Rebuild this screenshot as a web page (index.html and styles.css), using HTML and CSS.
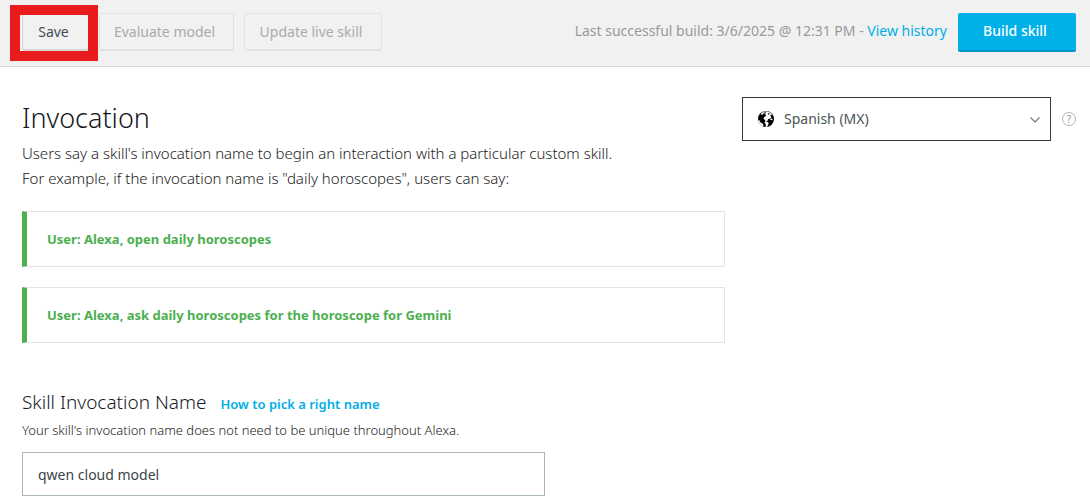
FILE: index.html
```html
<!DOCTYPE html>
<html lang="en">
<head>
<meta charset="utf-8">
<title>Invocation</title>
<link rel="stylesheet" href="styles.css">
</head>
<body>
<header class="toolbar">
  <div class="toolbar-actions">
    <div class="save-wrap">
      <button class="btn btn-save" type="button">Save</button>
      <span class="highlight"></span>
    </div>
    <button class="btn btn-evaluate" type="button" disabled>Evaluate model</button>
    <button class="btn btn-update" type="button" disabled>Update live skill</button>
  </div>
  <p class="build-status">Last successful build: 3/6/2025 @ 12:31 PM - <a class="link" href="#">View history</a></p>
  <button class="btn-primary" type="button">Build skill</button>
</header>
<main class="content">
  <div class="main-column">
    <h1 class="title">Invocation</h1>
    <p class="intro">Users say a skill's invocation name to begin an interaction with a particular custom skill.<br>For example, if the invocation name is "daily horoscopes", users can say:</p>
    <p class="callout">User: Alexa, open daily horoscopes</p>
    <p class="callout">User: Alexa, ask daily horoscopes for the horoscope for Gemini</p>
    <div class="field-head">
      <h2 class="subtitle"><label for="name">Skill Invocation Name</label></h2>
      <a class="link link-strong" href="#">How to pick a right name</a>
    </div>
    <p class="hint">Your skill's invocation name does not need to be unique throughout Alexa.</p>
    <input class="name-input" id="name" type="text" value="qwen cloud model">
  </div>
  <aside class="locale">
    <div class="select-wrap">
      <select class="locale-select" aria-label="Language"><option>Spanish (MX)</option></select>
      <svg class="globe" viewBox="0 0 16 16" aria-hidden="true">
        <circle cx="8" cy="8" r="8" fill="#000"/>
        <path fill="#fff" d="M3.500 1.900 6 .6l3.500-.2 3 1.300 2 2.300-1.700-.3-.6 1.300 1.300.9-1.200 1.500-2 .5-.6 1.700-1.500 1L7 9.300 5.500 7.500 6 6.300l2-1.500-.5-1.600-2-.2-1.300.8-1.500-.3z"/>
        <path fill="#000" d="m5.500 1.700 2-.5.6.6-1 .9-1.500.1zM9.500 2.800l1.400-.8.900.9-1.100.9z"/>
        <path fill="#fff" d="m.2 8.800 1.500.6.8 2.200 2.600 1.300.3 2.600-2-.8-2-2.200z"/>
        <path fill="#fff" d="m7.200 10.300 2.500.6 1 1.400-1.300 3.200-1.800.4.200-2.600-1.300-1.500z"/>
        <path fill="#fff" d="m11.700 8 2.300-.5.7 1.200-1.300.5z"/>
      </svg>
      <svg class="chevron" viewBox="0 0 10 6" aria-hidden="true"><path d="m.5.5 4.500 4.500L9.500.5" fill="none" stroke="#777" stroke-width="1.200"/></svg>
    </div>
    <button class="help" type="button" aria-label="Help">?</button>
  </aside>
</main>
</body>
</html>
```
FILE: styles.css
```css
* { box-sizing: border-box; }
body {
  margin: 0;
  background: #fff;
  color: #16191f;
  font: 14px/20px "Noto Sans", "Open Sans", sans-serif;
}
h1, h2, p { margin: 0; font-weight: 300; }
button, input, select { font: inherit; }
.toolbar {
  display: flex;
  align-items: flex-start;
  padding: 13px 14px 14px 22px;
  background: #f1f1f1;
  border-bottom: 1px solid #d9d9d9;
}
.toolbar-actions { display: flex; flex: 1; }
.btn {
  height: 38px;
  padding: 0;
  border: 1px solid #e3e3e3;
  border-bottom-width: 2px;
  border-radius: 3px;
  background: #f1f1f1;
  color: #aaa;
}
.save-wrap { position: relative; margin-right: 10px; }
.btn-save { width: 67px; padding-right: 4px; border-color: #d5d5d5; color: #444c55; }
.btn-evaluate { width: 135px; padding-right: 4px; margin-right: 10px; }
.btn-update { width: 138px; padding-right: 4px; }
.highlight {
  position: absolute;
  top: -8px;
  left: -12px;
  width: 88px;
  height: 56px;
  border: 10px solid #e81c1c;
  pointer-events: none;
}
.build-status { padding: 8px 11px 0 0; color: #999; font-weight: 400; white-space: nowrap; }
.link { color: #00ade6; text-decoration: none; }
.btn-primary {
  width: 118px;
  height: 39px;
  padding: 0 4px 2px 0;
  border: 0;
  border-bottom: 2px solid #0095c5;
  border-radius: 2px;
  background: #00b0e8;
  color: #fff;
  font-weight: 500;
}
.content {
  display: grid;
  grid-template-columns: 703fr 334fr;
  column-gap: 17px;
  align-items: start;
  padding: 29px 14px 2px 22px;
}
.title { font-size: 27px; line-height: 44px; }
.intro { padding-top: 1px; margin-bottom: 20px; font-size: 15px; line-height: 25px; color: #222; }
.callout {
  margin-bottom: 20px;
  padding: 17px 20px;
  border: 1px solid #e3e3e3;
  border-left: 5px solid #4caf50;
  border-radius: 1px;
  color: #4caf50;
  font-size: 13px;
  font-weight: 700;
}
.field-head { display: flex; align-items: baseline; gap: 14px; padding-top: 25px; }
.subtitle { font-size: 19px; line-height: 28px; }
.link-strong { font-size: 13px; font-weight: 600; }
.hint { padding-top: 4px; margin-bottom: 12px; font-size: 13px; color: #222; }
.name-input {
  display: block;
  width: 523px;
  max-width: 100%;
  height: 44px;
  padding: 0 15px;
  border: 1px solid #aab7b8;
  color: #3b4448;
}
.locale { display: flex; align-items: center; gap: 11px; padding-top: 1px; }
.select-wrap { position: relative; flex: 1; }
.locale-select {
  display: block;
  width: 100%;
  height: 44px;
  padding: 0 41px;
  border: 1px solid #31393b;
  border-radius: 0;
  appearance: none;
  background: #fff;
  color: #4a5457;
}
.globe { position: absolute; left: 16px; top: 14px; width: 16px; height: 16px; pointer-events: none; }
.chevron { position: absolute; right: 11px; top: 20px; width: 10px; height: 6px; pointer-events: none; }
.help {
  width: 14px;
  height: 14px;
  padding: 0;
  border: 1px solid #aab7b8;
  border-radius: 50%;
  background: #fff;
  color: #879596;
  font-size: 10px;
  line-height: 12px;
}
```
